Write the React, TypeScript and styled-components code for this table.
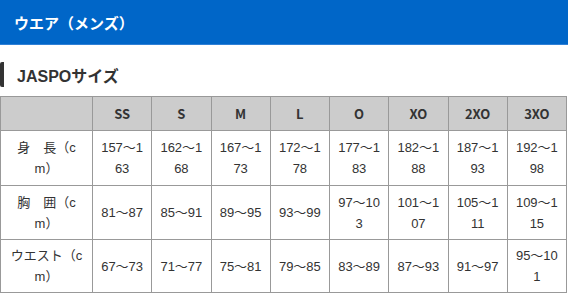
import React from "react";
import styled, { createGlobalStyle } from "styled-components";

const Global = createGlobalStyle`
  html, body { margin: 0; padding: 0; background: #fff; }
  body { font-family: "Liberation Sans", "Noto Sans CJK JP", sans-serif; color: #333; }
`;

const Page = styled.div`
  width: 568px;
  display: flex;
  flex-direction: column;
`;

const TitleBar = styled.h1`
  margin: 0;
  height: 45px;
  box-sizing: border-box;
  padding-left: 14px;
  display: flex;
  align-items: center;
  background: #0066c8;
  border-bottom: 1px solid #2f80d6;
  color: #fff;
  font-size: 15px;
  font-weight: bold;
  font-family: "Liberation Sans", "Noto Sans CJK JP", sans-serif;
`;

const SubHeading = styled.h2`
  margin: 17px 0 9px 0;
  height: 25px;
  display: flex;
  align-items: center;
  padding-left: 13px;
  border-left: 4px solid #333;
  border-radius: 2px;
  box-sizing: border-box;
  font-size: 16px;
  font-weight: bold;
  color: #333;
`;

const Table = styled.table`
  width: 567px;
  table-layout: fixed;
  border-collapse: collapse;
  font-size: 13px;
  color: #333;
`;

const HeadCell = styled.th`
  height: 33px;
  padding: 0;
  background: #cccccc;
  border: 1px solid #999;
  font-weight: bold;
  text-align: center;
  font-family: "Noto Sans CJK JP", "Liberation Sans", sans-serif;
`;

const LabelCell = styled.td<{ $h: number }>`
  height: ${(p) => p.$h}px;
  padding: 0 6px;
  border: 1px solid #999;
  text-align: center;
  line-height: 21px;
`;

const Cell = styled.td<{ $h: number }>`
  height: ${(p) => p.$h}px;
  padding: 0 7px;
  border: 1px solid #999;
  text-align: center;
  line-height: 21px;
  word-break: break-all;
`;

const sizes = ["SS", "S", "M", "L", "O", "XO", "2XO", "3XO"];

const rows: { label: [string, string]; values: string[]; h: number }[] = [
  {
    label: ["身　長（c", "m）"],
    values: ["157～163", "162～168", "167～173", "172～178", "177～183", "182～188", "187～193", "192～198"],
    h: 54,
  },
  {
    label: ["胸　囲（c", "m）"],
    values: ["81～87", "85～91", "89～95", "93～99", "97～103", "101～107", "105～111", "109～115"],
    h: 53,
  },
  {
    label: ["ウエスト（c", "m）"],
    values: ["67～73", "71～77", "75～81", "79～85", "83～89", "87～93", "91～97", "95～101"],
    h: 52,
  },
];

export default function App() {
  return (
    <Page>
      <Global />
      <TitleBar>ウエア（メンズ）</TitleBar>
      <SubHeading>JASPOサイズ</SubHeading>
      <Table>
        <colgroup>
          <col style={{ width: 92 }} />
          {sizes.map((s) => (
            <col key={s} />
          ))}
        </colgroup>
        <thead>
          <tr>
            <HeadCell />
            {sizes.map((s) => (
              <HeadCell key={s}>{s}</HeadCell>
            ))}
          </tr>
        </thead>
        <tbody>
          {rows.map((r) => (
            <tr key={r.label[0]}>
              <LabelCell $h={r.h}>
                {r.label[0]}
                <br />
                {r.label[1]}
              </LabelCell>
              {r.values.map((v, i) => (
                <Cell key={i} $h={r.h}>
                  {v}
                </Cell>
              ))}
            </tr>
          ))}
        </tbody>
      </Table>
    </Page>
  );
}
